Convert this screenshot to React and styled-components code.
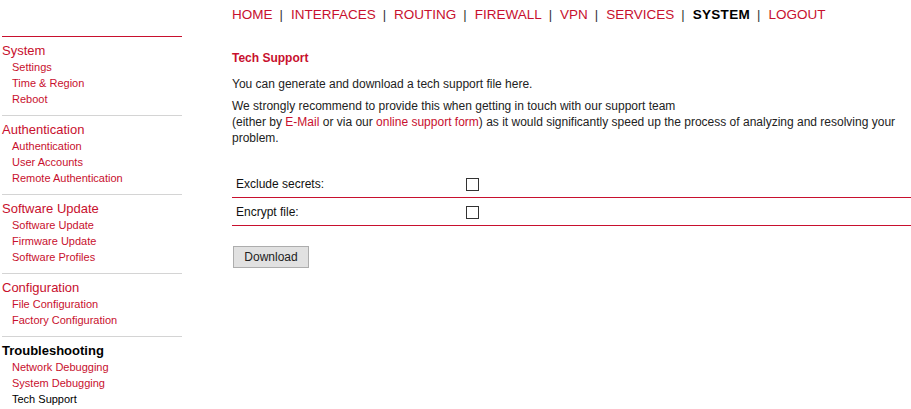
import React from "react";
import styled, { createGlobalStyle } from "styled-components";

const RED = "#c8102e";

const Global = createGlobalStyle`
  html, body { margin: 0; padding: 0; background: #fff; }
  body { font-family: "Liberation Sans", Arial, sans-serif; color: #222; }
  a { text-decoration: none; }
`;

const Page = styled.div`
  display: flex;
  align-items: flex-start;
  padding-left: 2px;
  width: 909px;
`;

const Sidebar = styled.nav`
  width: 180px;
  flex: none;
  margin-top: 36px;
  border-top: 1px solid ${RED};
`;

const Section = styled.div`
  padding: 6px 0 8px;
  border-bottom: ${(p) => (p.$last ? "none" : "1px solid #d4d4d4")};
`;

const SectionTitle = styled.a`
  display: block;
  font-size: 13px;
  line-height: 16px;
  color: ${(p) => (p.$active ? "#000" : RED)};
  font-weight: ${(p) => (p.$active ? "bold" : "normal")};
`;

const SideItem = styled.a`
  display: block;
  padding-left: 10px;
  font-size: 11px;
  line-height: 16px;
  color: ${(p) => (p.$active ? "#000" : RED)};
`;

const Main = styled.main`
  flex: 1;
  margin-left: 50px;
`;

const TopNav = styled.div`
  padding-top: 1px;
  height: 28px;
  line-height: 28px;
  font-size: 13.5px;
  white-space: nowrap;
`;

const NavLink = styled.a`
  color: ${(p) => (p.$active ? "#000" : RED)};
  font-weight: ${(p) => (p.$active ? "bold" : "normal")};
  letter-spacing: ${(p) => (p.$active ? "0.3px" : "0")};
`;

const Sep = styled.span`
  color: #333;
  margin: 0 8px 0 7px;
  font-size: 13px;
`;

const Title = styled.h1`
  margin: 21px 0 10px;
  font-size: 12px;
  line-height: 16px;
  font-weight: bold;
  color: ${RED};
`;

const Text = styled.div`
  padding-right: 4px;
`;

const Para = styled.p`
  margin: 0 0 6px;
  font-size: 12px;
  line-height: 16px;
  color: #222;
`;

const InlineLink = styled.a`
  color: ${RED};
`;

const OptionTable = styled.div`
  margin-top: 24px;
`;

const Row = styled.div`
  display: grid;
  grid-template-columns: 230px 1fr;
  align-items: center;
  height: 27px;
  border-bottom: 1px solid ${RED};
`;

const Label = styled.div`
  font-size: 12px;
  padding-left: 4px;
  color: #111;
`;

const Check = styled.input.attrs({ type: "checkbox" })`
  appearance: none;
  -webkit-appearance: none;
  display: block;
  width: 13px;
  height: 13px;
  margin: 1px 0 0 4px;
  border: 1px solid #333;
  background: #fff;
  box-sizing: border-box;
`;

const Button = styled.button`
  margin: 20px 0 0 1px;
  width: 76px;
  height: 22px;
  background: #e1e1e1;
  border: 1px solid #adadad;
  font-family: "Liberation Sans", Arial, sans-serif;
  font-size: 12px;
  color: #222;
  padding: 0;
`;

const nav = [
  ["HOME"],
  ["INTERFACES"],
  ["ROUTING"],
  ["FIREWALL"],
  ["VPN"],
  ["SERVICES"],
  ["SYSTEM", true],
  ["LOGOUT"],
];

const sections = [
  { title: "System", items: ["Settings", "Time & Region", "Reboot"] },
  { title: "Authentication", items: ["Authentication", "User Accounts", "Remote Authentication"] },
  { title: "Software Update", items: ["Software Update", "Firmware Update", "Software Profiles"] },
  { title: "Configuration", items: ["File Configuration", "Factory Configuration"] },
  { title: "Troubleshooting", active: true, items: ["Network Debugging", "System Debugging", "Tech Support"], activeItem: "Tech Support" },
];

export default function App() {
  return (
    <>
      <Global />
      <Page>
        <Sidebar>
          {sections.map((s, i) => (
            <Section key={s.title} $last={i === sections.length - 1}>
              <SectionTitle $active={s.active}>{s.title}</SectionTitle>
              {s.items.map((it) => (
                <SideItem key={it} $active={s.activeItem === it}>{it}</SideItem>
              ))}
            </Section>
          ))}
        </Sidebar>
        <Main>
          <TopNav>
            {nav.map(([label, active], i) => (
              <React.Fragment key={label}>
                <NavLink $active={active}>{label}</NavLink>
                {i < nav.length - 1 && <Sep>|</Sep>}
              </React.Fragment>
            ))}
          </TopNav>
          <Title>Tech Support</Title>
          <Text>
            <Para>You can generate and download a tech support file here.</Para>
            <Para>
              We strongly recommend to provide this when getting in touch with our support team
              <br />
              (either by <InlineLink>E-Mail</InlineLink> or via our <InlineLink>online support form</InlineLink>) as it would significantly speed up the process of analyzing and resolving your problem.
            </Para>
          </Text>
          <OptionTable>
            <Row>
              <Label>Exclude secrets:</Label>
              <Check />
            </Row>
            <Row>
              <Label>Encrypt file:</Label>
              <Check />
            </Row>
          </OptionTable>
          <Button>Download</Button>
        </Main>
      </Page>
    </>
  );
}
